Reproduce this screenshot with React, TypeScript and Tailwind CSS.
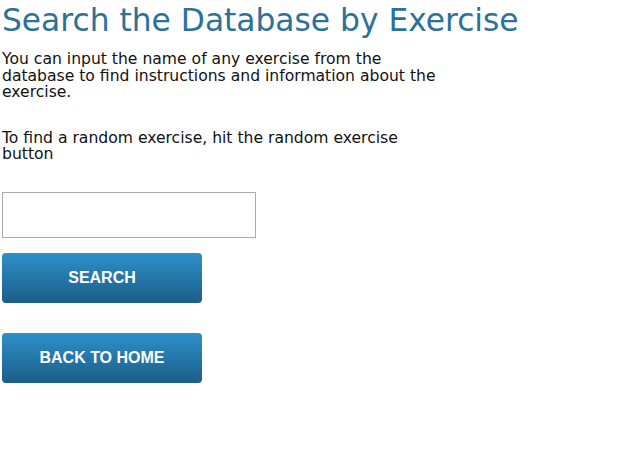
export default function App() {
  return (
    <div className="min-h-screen bg-white px-[2px] pt-[3px]" style={{ fontFamily: '"DejaVu Sans", Verdana, sans-serif' }}>
      <h1 className="text-[31.3px] leading-[34px] text-[#2b7198] m-0">Search the Database by Exercise</h1>
      <p className="mt-[14px] w-[438px] text-[15.6px] leading-[16.5px] text-[#111]">
        You can input the name of any exercise from the database to find instructions and information about the exercise.
      </p>
      <p className="mt-[29px] w-[438px] text-[15.6px] leading-[16.5px] text-[#111]">
        To find a random exercise, hit the random exercise button
      </p>
      <input type="text" className="mt-[29px] block w-[254px] h-[46px] border border-[#aaa] bg-white outline-none" />
      <button className="mt-[15px] block w-[200px] h-[50px] rounded-[4px] bg-gradient-to-b from-[#2e90c8] to-[#1c5e8a] text-white font-bold text-[16px] uppercase" style={{ fontFamily: '"Liberation Sans", Arial, sans-serif' }}>
        Search
      </button>
      <button className="mt-[30px] block w-[200px] h-[50px] rounded-[4px] bg-gradient-to-b from-[#2e90c8] to-[#1c5e8a] text-white font-bold text-[16px] uppercase" style={{ fontFamily: '"Liberation Sans", Arial, sans-serif' }}>
        Back to Home
      </button>
    </div>
  );
}
